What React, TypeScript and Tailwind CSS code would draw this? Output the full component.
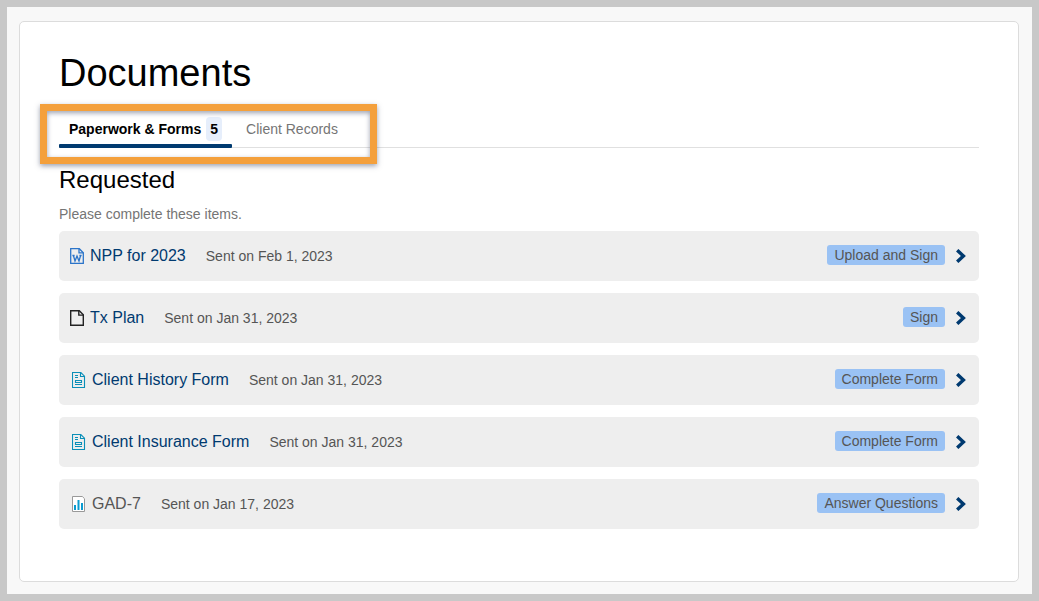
import React from "react";

type IconKind = "word" | "file" | "form" | "chart";

interface RequestedItem {
  id: string;
  title: string;
  sentOn: string;
  action: string;
  icon: IconKind;
}

const ITEMS: RequestedItem[] = [
  { id: "npp", title: "NPP for 2023", sentOn: "Feb 1, 2023", action: "Upload and Sign", icon: "word" },
  { id: "tx-plan", title: "Tx Plan", sentOn: "Jan 31, 2023", action: "Sign", icon: "file" },
  { id: "history", title: "Client History Form", sentOn: "Jan 31, 2023", action: "Complete Form", icon: "form" },
  { id: "insurance", title: "Client Insurance Form", sentOn: "Jan 31, 2023", action: "Complete Form", icon: "form" },
  { id: "gad-7", title: "GAD-7", sentOn: "Jan 17, 2023", action: "Answer Questions", icon: "chart" }
];

const App: React.FC = () => {
  return (
    <div className="flex min-h-screen flex-col border-7 border-[#c8c8c8] bg-[#f8f8f8] pt-3.5 pr-[13px] pb-3 pl-3 font-['Liberation_Sans',Arial,sans-serif] text-sm text-black">
      <main className="flex-grow rounded-[5px] border border-[#dcdcdc] bg-white px-[39px] pt-[29px] pb-10">
        <h1 className="text-[38px] leading-11">Documents</h1>
        <DocumentTabs />
        <section className="mt-[18px]">
          <h2 className="text-2xl leading-7">Requested</h2>
          <p className="mt-2.5 text-[#757575]">Please complete these items.</p>
          <ul className="mt-[7px] flex flex-col gap-3">
            {ITEMS.map((item) => (
              <RequestedRow key={item.id} item={item} />
            ))}
          </ul>
        </section>
      </main>
    </div>
  );
};

export default App;

const DocumentTabs: React.FC = () => {
  return (
    <div className="relative mt-[19px]">
      <div role="tablist" className="flex gap-1 shadow-[inset_0_-1px_0_#e0e0e0]">
        <button
          type="button"
          role="tab"
          aria-selected="true"
          className="flex cursor-pointer flex-col font-bold"
        >
          <span className="flex items-center gap-[5px] px-2.5 py-[3px]">
            Paperwork &amp; Forms
            <span className="rounded-sm bg-[#e6eefb] px-1 leading-6">5</span>
          </span>
          <span className="h-1 w-full rounded-[1px] bg-[#003a70]" />
        </button>
        <button
          type="button"
          role="tab"
          aria-selected="false"
          className="cursor-pointer px-2.5 pb-1 text-[#757575]"
        >
          Client Records
        </button>
      </div>
      {/* highlight box around both tabs */}
      <div className="pointer-events-none absolute -top-2.5 -bottom-4 -left-[19px] w-[337px] border-7 border-[#f4a03c] shadow-[0_2px_5px_rgba(60,70,100,0.5),inset_0_2px_5px_rgba(60,70,100,0.5)]" />
    </div>
  );
};

const RequestedRow: React.FC<{ item: RequestedItem }> = ({ item }) => {
  return (
    <li>
      <a
        href={`#${item.id}`}
        className="flex h-[50px] items-center rounded-[5px] bg-[#eee] pr-3 pl-[11px] text-[#555]"
      >
        <FileIcon kind={item.icon} />
        <span className="flex flex-grow items-baseline gap-5 pl-1.5">
          <span
            className={
              item.icon === "chart" ? "text-base" : "text-base text-[#003a70]"
            }
          >
            {item.title}
          </span>
          <span>Sent on {item.sentOn}</span>
        </span>
        <span className="mb-0.5 rounded-[3px] bg-[#9ac2f4] px-[7px]">
          {item.action}
        </span>
        <svg width="12" height="14" viewBox="0 0 12 14" className="ml-2.5 text-[#003a70]" aria-hidden="true">
          <path d="M2.2 1.2 8.4 7l-6.2 5.8" fill="none" stroke="currentColor" strokeWidth="3.4" />
        </svg>
      </a>
    </li>
  );
};

const FileIcon: React.FC<{ kind: IconKind }> = ({ kind }) => {
  if (kind === "word") {
    return (
      <svg width="14" height="16" viewBox="0 0 14 16" fill="none" stroke="#2b74c9" strokeWidth="1.3" aria-hidden="true">
        <path d="M.7.7h8.6l4 4v10.6H.7z" />
        <path d="M9 .7v4.2h4.3" />
        <path d="M2.4 7.5h2.2M3.4 7.5 5 13l2-5 2 5 1.6-5.5M9.4 7.5h2.2" />
      </svg>
    );
  }
  if (kind === "file") {
    return (
      <svg width="14" height="16" viewBox="0 0 14 16" fill="none" stroke="#222" strokeWidth="1.4" aria-hidden="true">
        <path d="M.7.7h8.6l4 4v10.6H.7z" />
        <path d="M8.8.7v4.4h4.5" />
      </svg>
    );
  }
  if (kind === "form") {
    return (
      <svg width="14" height="16" viewBox="0 0 14 16" fill="none" stroke="#0b8fb8" strokeWidth="1.1" className="ml-0.5" aria-hidden="true">
        <path d="M.5.5h8.3l3.7 3.7v11.3H.5z" />
        <path d="M8.5.5v4h4M3 3.5h3M3 5.5h3M3.5 8.5h6v2h-6zM3 12.5h7" />
      </svg>
    );
  }
  return (
    <svg width="14" height="16" viewBox="0 0 14 16" fill="none" className="ml-0.5" aria-hidden="true">
      <path d="M.5.5h9.8l2.2 2.2v12.8H.5z" fill="#fff" stroke="#999" />
      <path d="M3 14V9M6.5 14V4M10 14V7" stroke="#0a9bd0" strokeWidth="2" />
    </svg>
  );
};
